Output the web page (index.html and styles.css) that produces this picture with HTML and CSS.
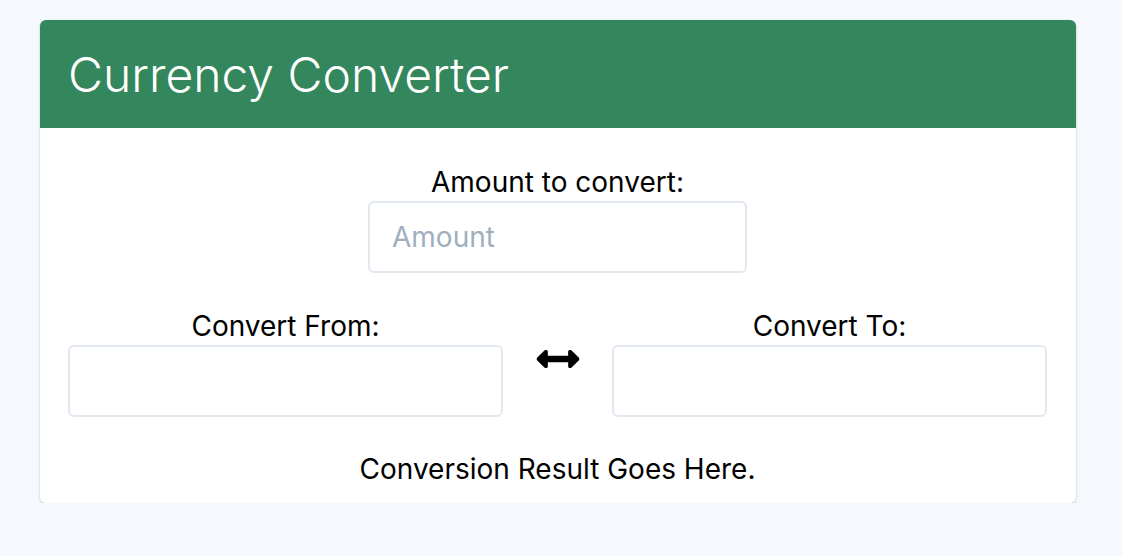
FILE: index.html
```html
<!DOCTYPE html>
<html lang="en">
<head>
<meta charset="utf-8">
<title>Currency Converter</title>
<link rel="stylesheet" href="styles.css">
</head>
<body>
<div class="card">
  <div class="card-header">
    <h1 class="title">Currency Converter</h1>
  </div>
  <div class="card-body">
    <div class="amount-group">
      <label class="label" for="amount">Amount to convert:</label>
      <input class="input amount-input" id="amount" type="text" placeholder="Amount">
    </div>
    <div class="convert-row">
      <div class="convert-col">
        <label class="label">Convert From:</label>
        <div class="input select-box"></div>
      </div>
      <div class="swap-col">
        <svg class="swap-icon" viewBox="0 148 512 216" width="44" height="18" aria-hidden="true">
          <path fill="#000" d="M377.941 169.941V216H134.059v-46.059c0-21.382-25.851-32.090-40.971-16.971L7.029 239.029c-9.373 9.373-9.373 24.568 0 33.941l86.059 86.059c15.119 15.119 40.971 4.411 40.971-16.971V296h243.882v46.059c0 21.382 25.851 32.09 40.971 16.971l86.059-86.059c9.373-9.373 9.373-24.568 0-33.941l-86.059-86.059c-15.119-15.12-40.971-4.412-40.971 16.970z"/>
        </svg>
      </div>
      <div class="convert-col">
        <label class="label">Convert To:</label>
        <div class="input select-box"></div>
      </div>
    </div>
    <p class="result">Conversion Result Goes Here.</p>
  </div>
</div>
</body>
</html>
```

FILE: styles.css
```css
* { box-sizing: border-box; }

body {
  margin: 0;
  background: #f5f8fc;
  font-family: "Inter", "Liberation Sans", sans-serif;
  color: #000;
}

.card {
  margin: 20px 0 0 40px;
  width: 1036px;
  background: #fff;
  border-radius: 6px;
  overflow: hidden;
  box-shadow: 0 1px 3px rgba(0, 0, 0, 0.16), 0 1px 2px rgba(0, 0, 0, 0.08);
}

.card-header {
  background: #34865c;
  height: 108px;
  padding: 0 28px;
  display: flex;
  align-items: center;
}

.title {
  margin: 0;
  color: #fff;
  font-size: 48px;
  font-weight: 300;
  line-height: 1;
  padding-top: 2px;
}

.card-body {
  padding: 37px 29px 17px 28px;
}

.amount-group {
  display: flex;
  flex-direction: column;
  align-items: center;
}

.label {
  font-size: 28px;
  line-height: 34px;
  display: block;
  text-align: center;
  margin-bottom: 2px;
}

.input {
  border: 2px solid #e2e8f0;
  border-radius: 6px;
  height: 72px;
  background: #fff;
}

.amount-input {
  width: 379px;
  padding: 0 22px;
  font-family: inherit;
  font-size: 28px;
  color: #000;
  outline: none;
}

.amount-input::placeholder {
  color: #a0aec0;
}

.convert-row {
  display: flex;
  margin-top: 36px;
}

.convert-col {
  flex: 1;
  display: flex;
  flex-direction: column;
}

.select-box {
  width: 100%;
}

.swap-col {
  width: 109px;
  display: flex;
  justify-content: center;
  padding-top: 41px;
}

.swap-icon {
  display: block;
}

.result {
  margin: 35px 0 0;
  text-align: center;
  font-size: 28px;
  line-height: 34px;
}
```
